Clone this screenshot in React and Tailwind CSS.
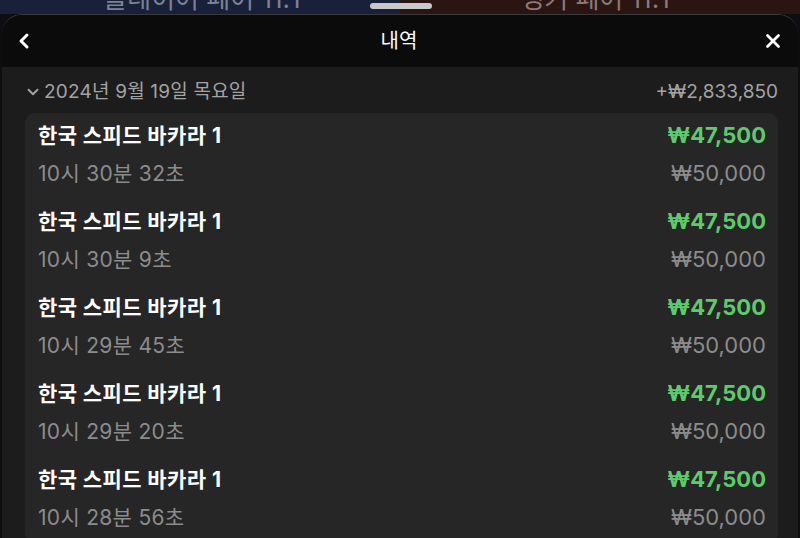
import { ChevronLeft, ChevronDown, X } from 'lucide-react';

const rows = [
    { time: '10시 30분 32초' },
    { time: '10시 30분 9초' },
    { time: '10시 29분 45초' },
    { time: '10시 29분 20초' },
    { time: '10시 28분 56초' },
];

const font = { fontFamily: '"Inter", "Noto Sans CJK KR", sans-serif' };

const HistoryRow = ({ time }) => (
    <div className="flex justify-between pl-[13px] pr-[12px] pt-[9px] pb-[11px]">
        <div className="flex flex-col gap-[10px]">
            <div className="h-7 flex items-center text-[21px] font-bold text-white tracking-[0.4px]">
                한국 스피드 바카라 1
            </div>
            <div className="h-7 flex items-center text-[21px] text-[#8c8c8c] tracking-[0.3px]">{time}</div>
        </div>
        <div className="flex flex-col items-end gap-[10px]">
            <div className="h-7 flex items-center text-[22px] font-bold text-[#5dcb6c] -mt-[1px]">
                ₩47,500
            </div>
            <div className="h-7 flex items-center text-[22px] text-[#8c8c8c]">₩50,000</div>
        </div>
    </div>
);

const App = () => {
    return (
        <div className="w-[800px] h-[538px] overflow-hidden bg-[#0d0d12] flex flex-col" style={font}>
            {/* strip of the game behind the sheet */}
            <div className="relative h-[14px] flex shrink-0 overflow-hidden">
                <div className="flex-1 bg-[#18203a] flex justify-center overflow-hidden">
                    <span className="text-[26px] leading-none text-[#7d8294] -mt-[14px] ml-[4px]">플레이어 페어 11:1</span>
                </div>
                <div className="flex-1 bg-[#2a1512] flex justify-center overflow-hidden">
                    <span className="text-[26px] leading-none text-[#8a7a78] -mt-[14px] -ml-[10px]">뱅커 페어 11:1</span>
                </div>
                <div className="absolute left-[370px] top-[3px] w-[62px] h-[6px] rounded-full bg-[#c9c9cc]" />
            </div>

            <div className="flex-1 mx-[2px] rounded-t-[20px] bg-[#1c1c1c] border-t border-[#3a3a3a] overflow-hidden flex flex-col">
                <div className="h-[52px] bg-[#0b0b0b] flex items-center justify-between pl-[10px] pr-[14px] shrink-0">
                    <ChevronLeft className="w-[24px] h-[24px] text-white" strokeWidth={3} />
                    <span className="text-[20px] text-white">내역</span>
                    <X className="w-[22px] h-[22px] text-white" strokeWidth={3} />
                </div>

                <div className="flex flex-col pl-[23px] pr-[20px]">
                    <div className="h-6 mt-[13px] mb-[9px] flex items-center justify-between text-[#a3a3a3]">
                        <div className="flex items-center">
                            <ChevronDown className="w-[18px] h-[18px] mr-[2px] -ml-[1px]" strokeWidth={2.5} />
                            <span className="text-[19px] tracking-[0.2px]">2024년 9월 19일 목요일</span>
                        </div>
                        <span className="text-[19px]">+₩2,833,850</span>
                    </div>

                    <div className="bg-[#262626] rounded-[10px] flex flex-col">
                        {rows.map((r) => (
                            <HistoryRow key={r.time} time={r.time} />
                        ))}
                    </div>
                </div>
            </div>
        </div>
    );
};

export default App;
